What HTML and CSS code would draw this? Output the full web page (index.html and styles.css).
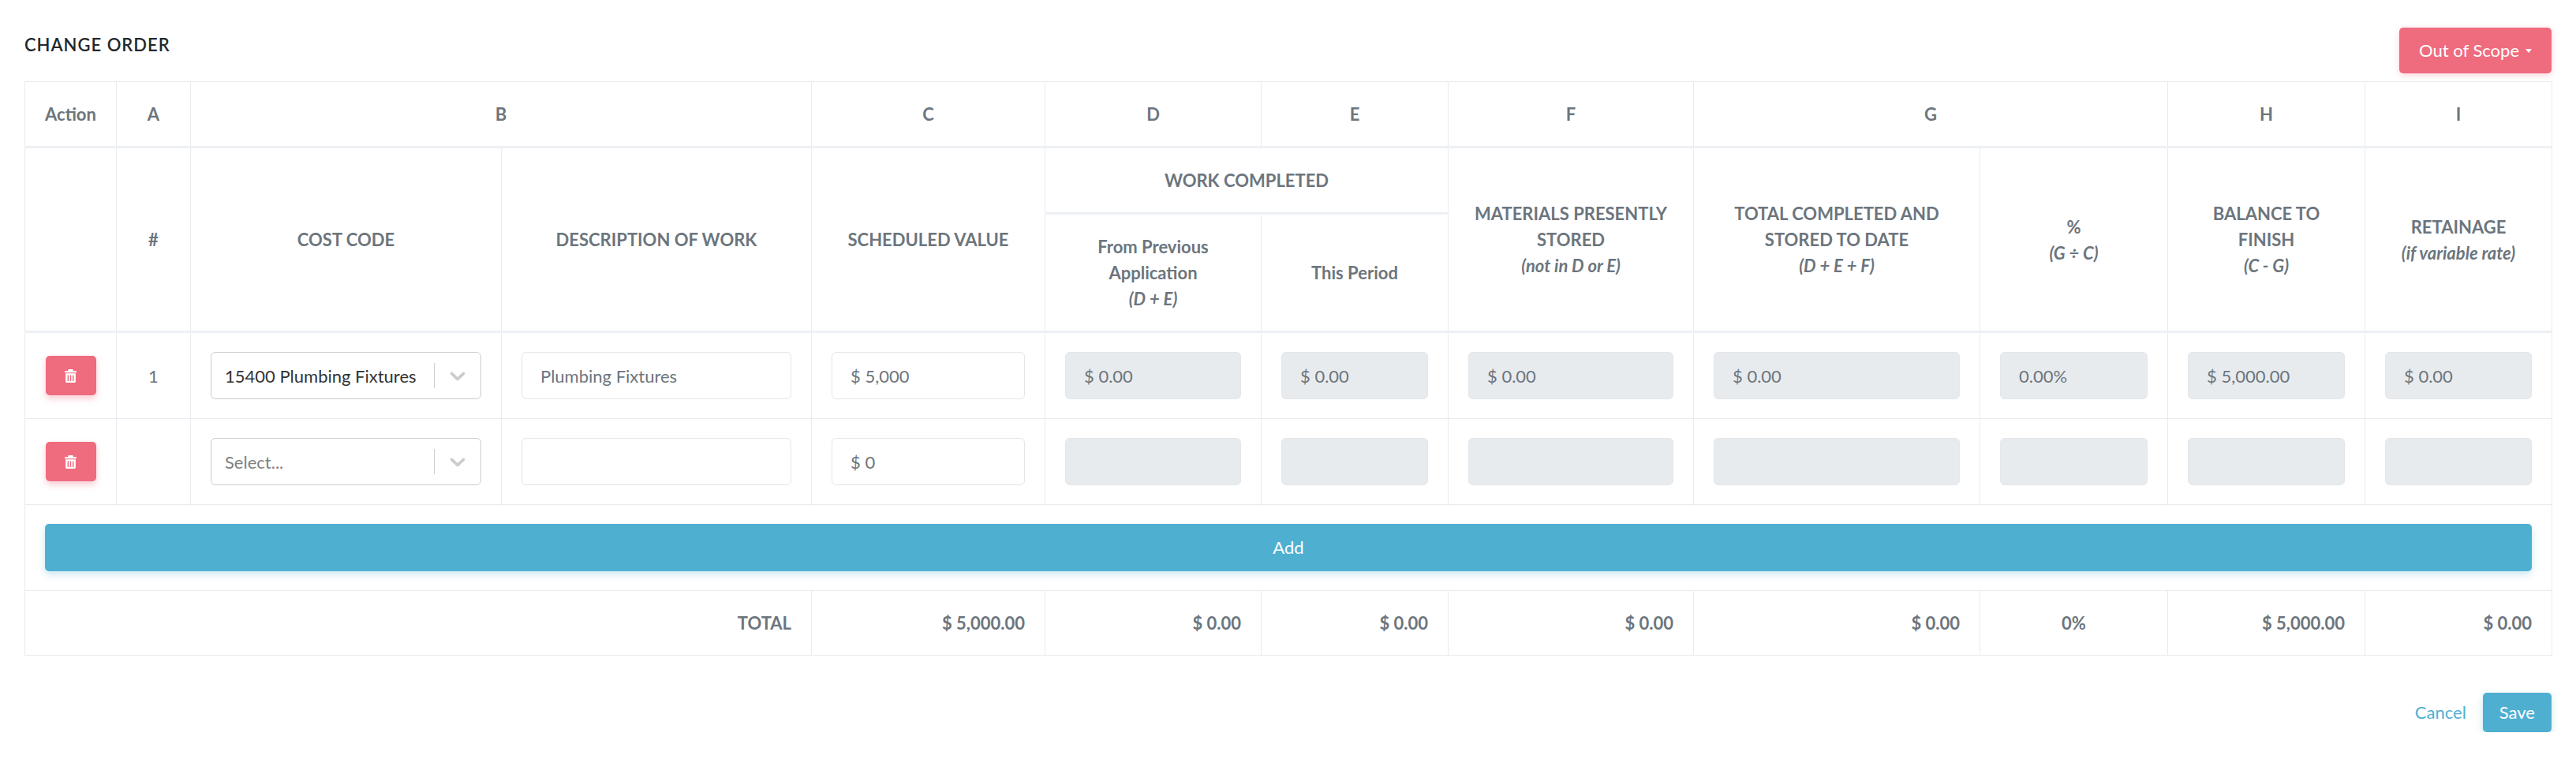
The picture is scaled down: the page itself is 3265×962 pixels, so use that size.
FILE: index.html
```html
<!DOCTYPE html>
<html lang="en">
<head>
<meta charset="utf-8">
<title>Change Order</title>
<link rel="stylesheet" href="styles.css">
</head>
<body>
<div class="page">
  <div class="topbar">
    <h1 class="title">CHANGE ORDER</h1>
    <button class="btn btn-scope" type="button">Out of Scope<span class="caret"></span></button>
  </div>

  <table class="co-table">
    <colgroup>
      <col class="w-action"><col class="w-a"><col class="w-b1"><col class="w-b2"><col class="w-c">
      <col class="w-d"><col class="w-e"><col class="w-f"><col class="w-g1"><col class="w-g2">
      <col class="w-h"><col class="w-i">
    </colgroup>
    <thead>
      <tr>
        <th>Action</th><th>A</th><th colspan="2">B</th><th>C</th><th>D</th><th>E</th><th>F</th><th colspan="2">G</th><th>H</th><th>I</th>
      </tr>
      <tr>
        <th rowspan="2"></th>
        <th rowspan="2">#</th>
        <th rowspan="2">COST CODE</th>
        <th rowspan="2">DESCRIPTION OF WORK</th>
        <th rowspan="2">SCHEDULED VALUE</th>
        <th colspan="2">WORK COMPLETED</th>
        <th rowspan="2">MATERIALS PRESENTLY<br>STORED<span class="sub">(not in D or E)</span></th>
        <th rowspan="2">TOTAL COMPLETED AND<br>STORED TO DATE<span class="sub">(D + E + F)</span></th>
        <th rowspan="2">%<span class="sub">(G ÷ C)</span></th>
        <th rowspan="2">BALANCE TO<br>FINISH<span class="sub">(C - G)</span></th>
        <th rowspan="2">RETAINAGE<span class="sub">(if variable rate)</span></th>
      </tr>
      <tr>
        <th>From Previous<br>Application<span class="sub">(D + E)</span></th>
        <th>This Period</th>
      </tr>
    </thead>
    <tbody>
      <tr>
        <td><button class="btn btn-del" type="button" aria-label="Delete"><svg class="trash" viewBox="0 0 14 16" width="15" height="17"><path fill-rule="evenodd" fill="currentColor" d="M5 0h4a1 1 0 0 1 1 1v1h3.5a.5.5 0 0 1 .5.5V4H0V2.5a.5.5 0 0 1 .5-.5H4V1a1 1 0 0 1 1-1zM1 5h12v9.5A1.5 1.5 0 0 1 11.5 16h-9A1.5 1.5 0 0 1 1 14.5zM3.3 7v7h1.4V7zm3 0v7h1.4V7zm3 0v7h1.4V7z"/></svg></button></td>
        <td class="num">1</td>
        <td>
          <div class="select">
            <span class="select-value">15400 Plumbing Fixtures</span>
            <span class="select-sep"></span>
            <span class="select-ind"><svg viewBox="0 0 20 20" width="32" height="32"><path fill="currentColor" d="M4.516 7.548c.436-.446 1.043-.481 1.576 0L10 11.295l3.908-3.747c.533-.481 1.141-.446 1.574 0 .436.445.408 1.197 0 1.615-.406.418-4.695 4.502-4.695 4.502a1.095 1.095 0 0 1-1.576 0S4.924 9.581 4.516 9.163s-.436-1.170 0-1.615z"/></svg></span>
          </div>
        </td>
        <td><div class="input">Plumbing Fixtures</div></td>
        <td><div class="input">$ 5,000</div></td>
        <td><div class="input disabled">$ 0.00</div></td>
        <td><div class="input disabled">$ 0.00</div></td>
        <td><div class="input disabled">$ 0.00</div></td>
        <td><div class="input disabled">$ 0.00</div></td>
        <td><div class="input disabled">0.00%</div></td>
        <td><div class="input disabled">$ 5,000.00</div></td>
        <td><div class="input disabled">$ 0.00</div></td>
      </tr>
      <tr>
        <td><button class="btn btn-del" type="button" aria-label="Delete"><svg class="trash" viewBox="0 0 14 16" width="15" height="17"><path fill-rule="evenodd" fill="currentColor" d="M5 0h4a1 1 0 0 1 1 1v1h3.5a.5.5 0 0 1 .5.5V4H0V2.5a.5.5 0 0 1 .5-.5H4V1a1 1 0 0 1 1-1zM1 5h12v9.5A1.5 1.5 0 0 1 11.5 16h-9A1.5 1.5 0 0 1 1 14.5zM3.3 7v7h1.4V7zm3 0v7h1.4V7zm3 0v7h1.4V7z"/></svg></button></td>
        <td class="num"></td>
        <td>
          <div class="select">
            <span class="select-value placeholder">Select...</span>
            <span class="select-sep"></span>
            <span class="select-ind"><svg viewBox="0 0 20 20" width="32" height="32"><path fill="currentColor" d="M4.516 7.548c.436-.446 1.043-.481 1.576 0L10 11.295l3.908-3.747c.533-.481 1.141-.446 1.574 0 .436.445.408 1.197 0 1.615-.406.418-4.695 4.502-4.695 4.502a1.095 1.095 0 0 1-1.576 0S4.924 9.581 4.516 9.163s-.436-1.170 0-1.615z"/></svg></span>
          </div>
        </td>
        <td><div class="input"></div></td>
        <td><div class="input">$ 0</div></td>
        <td><div class="input disabled"></div></td>
        <td><div class="input disabled"></div></td>
        <td><div class="input disabled"></div></td>
        <td><div class="input disabled"></div></td>
        <td><div class="input disabled"></div></td>
        <td><div class="input disabled"></div></td>
        <td><div class="input disabled"></div></td>
      </tr>
      <tr>
        <td colspan="12"><button class="btn btn-add" type="button">Add</button></td>
      </tr>
    </tbody>
    <tfoot>
      <tr>
        <td colspan="4" class="tot">TOTAL</td>
        <td class="tot">$ 5,000.00</td>
        <td class="tot">$ 0.00</td>
        <td class="tot">$ 0.00</td>
        <td class="tot">$ 0.00</td>
        <td class="tot">$ 0.00</td>
        <td class="tot center">0%</td>
        <td class="tot">$ 5,000.00</td>
        <td class="tot">$ 0.00</td>
      </tr>
    </tfoot>
  </table>

  <div class="actions">
    <button class="btn btn-link" type="button">Cancel</button>
    <button class="btn btn-save" type="button">Save</button>
  </div>
</div>
</body>
</html>
```

FILE: styles.css
```css
* { box-sizing: border-box; }

body {
  margin: 0;
  background: #fff;
  font-family: Lato, "Noto Sans", sans-serif;
  font-size: 22px;
  line-height: 33px;
  color: #23282c;
}

.page {
  padding: 35px 31px 0;
}

.topbar {
  display: flex;
  justify-content: space-between;
  align-items: flex-start;
}

.title {
  margin: 6px 0 0;
  font-size: 22px;
  line-height: 32px;
  font-weight: 600;
  color: #23282c;
  letter-spacing: 1px;
}

.btn {
  font-family: inherit;
  font-size: 22px;
  line-height: 34px;
  border: 0;
  border-radius: 5px;
  cursor: pointer;
}

.btn-scope {
  height: 58px;
  padding: 0 25px;
  display: inline-flex;
  align-items: center;
  gap: 8px;
  background: #ef6b7e;
  color: #fff;
  box-shadow: 0 2px 8px rgba(239, 107, 126, 0.3);
}

.caret {
  width: 0;
  height: 0;
  border-top: 5px solid #fff;
  border-left: 4px solid transparent;
  border-right: 4px solid transparent;
}

.co-table {
  width: 100%;
  margin-top: 10px;
  border-collapse: collapse;
  table-layout: fixed;
  border: 1px solid #e8ebef;
}

.w-action { width: 116px; }
.w-a { width: 94px; }
.w-b1 { width: 394px; }
.w-b2 { width: 393px; }
.w-c { width: 296px; }
.w-d { width: 274px; }
.w-e { width: 237px; }
.w-f { width: 311px; }
.w-g1 { width: 363px; }
.w-g2 { width: 238px; }
.w-h { width: 250px; }
.w-i { width: 237px; }

.co-table th,
.co-table td {
  border: 1px solid #e8ebef;
  padding: 24px 25px;
  vertical-align: middle;
}

.co-table thead th {
  border-bottom: 3px solid #edf0f4;
  color: #6c757d;
  font-weight: 700;
  text-align: center;
  white-space: nowrap;
}

.sub {
  display: block;
  font-style: italic;
}

.num {
  text-align: center;
  color: #6c757d;
}

.btn-del {
  width: 64px;
  height: 50px;
  margin: 0 auto;
  padding: 0;
  display: flex;
  align-items: center;
  justify-content: center;
  background: #ef6b7e;
  color: #fff;
  box-shadow: 0 4px 9px rgba(239, 107, 126, 0.35);
}

.trash { display: block; }

.select {
  display: flex;
  align-items: center;
  height: 60px;
  border: 1px solid #cccccc;
  border-radius: 6px;
  background: #fff;
}

.select-value {
  flex: 1;
  min-width: 0;
  padding-left: 17px;
  color: #333;
  white-space: nowrap;
  overflow: hidden;
}

.select-value.placeholder { color: #808080; }

.select-sep {
  width: 1px;
  height: 32px;
  background: #cccccc;
}

.select-ind {
  display: flex;
  padding: 0 13px;
  color: #cccccc;
}

.input {
  height: 60px;
  padding: 0 23px;
  display: flex;
  align-items: center;
  border: 1px solid #e2e5e9;
  border-radius: 6px;
  background: #fff;
  color: #6c757d;
  white-space: nowrap;
  overflow: hidden;
}

.input.disabled {
  background: #e8ebee;
  border-color: #e4e7ea;
}

.btn-add {
  display: block;
  width: 100%;
  height: 60px;
  background: #4fafd1;
  color: #fff;
  box-shadow: 0 4px 10px rgba(79, 175, 209, 0.3);
}

.tot {
  text-align: right;
  font-weight: 700;
  color: #6c757d;
  white-space: nowrap;
}

.tot.center { text-align: center; }

.actions {
  display: flex;
  justify-content: flex-end;
  margin-top: 47px;
}

.btn-link {
  padding: 8px 21px;
  background: none;
  color: #4fafd1;
}

.btn-save {
  padding: 8px 21px;
  background: #4fafd1;
  color: #fff;
  box-shadow: 0 4px 10px rgba(79, 175, 209, 0.3);
}
```
